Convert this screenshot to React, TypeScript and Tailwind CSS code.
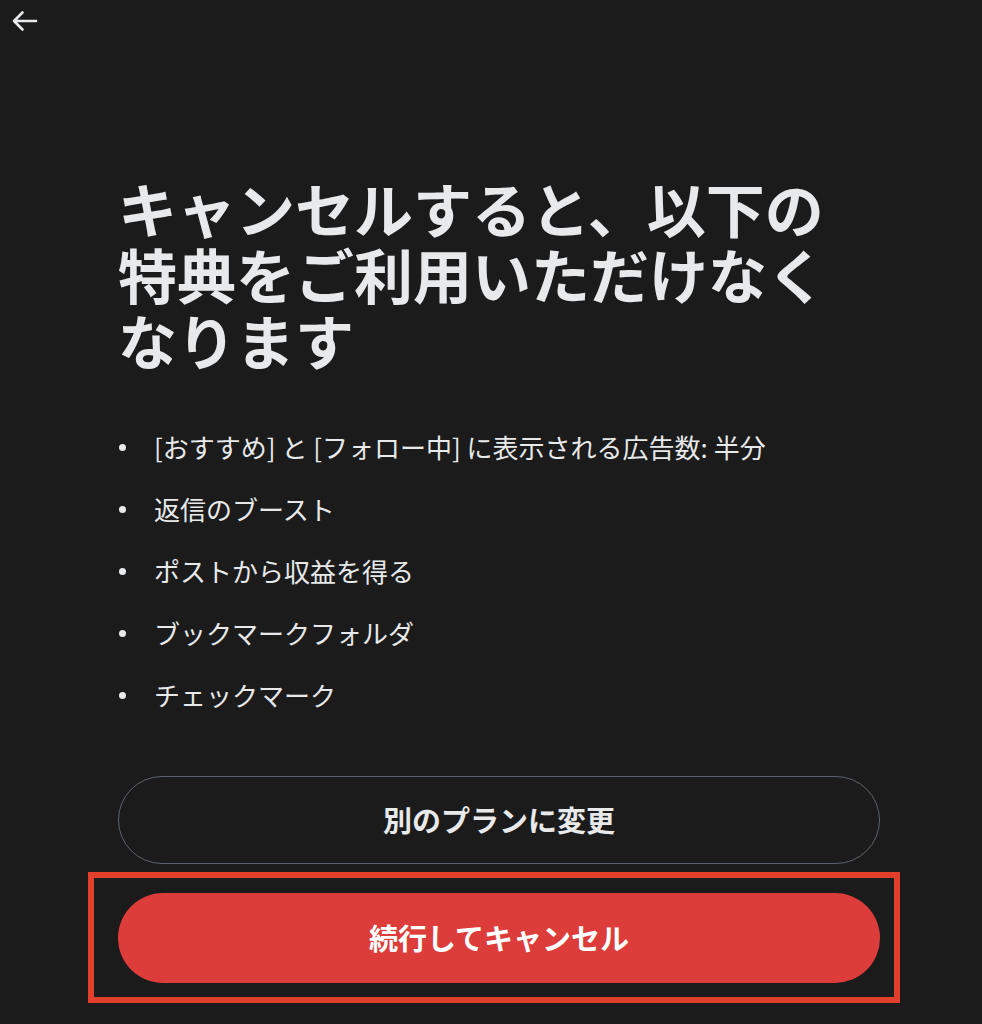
import { useState } from "react";

const perks = [
  "[おすすめ] と [フォロー中] に表示される広告数: 半分",
  "返信のブースト",
  "ポストから収益を得る",
  "ブックマークフォルダ",
  "チェックマーク",
];

function BackArrow() {
  return (
    <svg width="28" height="24" viewBox="0 0 28 24" fill="none">
      <path
        d="M25 12H3M11.5 3.5 3 12l8.5 8.5"
        stroke="#e7e9ea"
        strokeWidth="2.6"
        strokeLinecap="round"
        strokeLinejoin="round"
      />
    </svg>
  );
}

export default function App() {
  const [confirmed, setConfirmed] = useState(false);

  return (
    <div
      className="min-h-[1024px] w-full bg-[#1b1b1c] text-[#e7e9ea]"
      style={{ fontFamily: '"Noto Sans CJK JP", "Noto Sans", sans-serif' }}
    >
      <div className="flex h-[42px] items-center pl-[11px]">
        <button type="button" className="flex items-center">
          <BackArrow />
        </button>
      </div>

      <div className="box-content flex w-[762px] flex-col pl-[118px] pt-[133px]">
        <h1 className="w-[730px] text-[59px] font-bold leading-[66px]">
          キャンセルすると、以下の特典をご利用いただけなくなります
        </h1>

        <ul className="mt-[43px] flex flex-col">
          {perks.map((perk) => (
            <li key={perk} className="flex h-[62px] items-center">
              <span className="ml-[1px] mr-[28px] h-[7px] w-[7px] rounded-full bg-[#e7e9ea]" />
              <span className="text-[26px] leading-[30px]">{perk}</span>
            </li>
          ))}
        </ul>

        <button
          type="button"
          className="mt-[50px] flex h-[88px] w-[762px] items-center justify-center rounded-full border border-[#5c636a] text-[29px] font-bold"
        >
          別のプランに変更
        </button>

        <div className="ml-[-30px] mt-[8px] w-[812px] border-[6px] border-[#e2402d] pb-[14px] pl-[24px] pr-[14px] pt-[15px]">
          <button
            type="button"
            onClick={() => setConfirmed(!confirmed)}
            className="flex h-[90px] w-[762px] items-center justify-center rounded-full bg-[#dc3d3b] text-[29px] font-bold text-white"
          >
            続行してキャンセル
          </button>
        </div>
      </div>
    </div>
  );
}
